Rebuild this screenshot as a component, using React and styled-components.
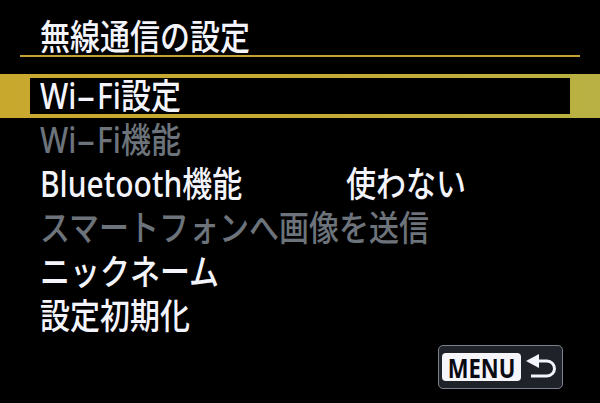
import React from "react";
import styled, { createGlobalStyle } from "styled-components";

const Global = createGlobalStyle`
  html, body { margin: 0; padding: 0; background: #000; }
  body { width: 600px; height: 403px; overflow: hidden; }
`;

const FONT = `"Noto Sans", "Noto Sans CJK JP", sans-serif`;

const Screen = styled.div`
  width: 600px;
  height: 403px;
  background: #000;
  display: flex;
  flex-direction: column;
  font-family: ${FONT};
  color: #f4f4fc;
`;

const Header = styled.div`
  margin: 0 20px;
  padding: 18px 0 0 20px;
  height: 57px;
  box-sizing: border-box;
  display: flex;
  align-items: center;
  border-bottom: 2px solid #c2a232;
`;

const Text = styled.span`
  display: inline-block;
  font-size: 30px;
  font-weight: 500;
  line-height: 36px;
  white-space: nowrap;
  transform: scaleY(1.18);
  color: ${(p) => (p.$disabled ? "#6c737b" : "#f4f4fc")};
`;

const Dash = styled.span`
  display: inline-block;
  margin: 0 6px 0 5px;
  transform: scaleX(2);
`;

const List = styled.div`
  margin-top: 17px;
  display: flex;
  flex-direction: column;
`;

const Row = styled.div`
  height: 44px;
  box-sizing: border-box;
  display: flex;
  align-items: stretch;
  padding: ${(p) => (p.$selected ? "4px 30px" : "0 0 0 40px")};
  background: ${(p) =>
    p.$selected
      ? "linear-gradient(90deg, #c9a82e 0%, #c4aa34 50%, #b9b144 100%)"
      : "transparent"};
`;

const RowBody = styled.div`
  flex: 1;
  display: grid;
  grid-template-columns: ${(p) => (p.$selected ? "296px" : "306px")} 1fr;
  align-items: center;
  background: #000;
  padding-left: ${(p) => (p.$selected ? "10px" : "0")};
`;

const Footer = styled.div`
  margin-top: 7px;
  display: flex;
  justify-content: flex-end;
  padding-right: 37px;
`;

const MenuButton = styled.div`
  display: flex;
  align-items: center;
  gap: 5px;
  height: 44px;
  box-sizing: border-box;
  padding: 7px 5px 7px 3px;
  border: 1px solid #7c828a;
  border-radius: 5px;
  background: #1f2329;
`;

const MenuKey = styled.div`
  width: 79px;
  height: 28px;
  border-radius: 4px;
  background: #f6f6fa;
  display: flex;
  align-items: center;
  justify-content: center;
`;

const MenuLabel = styled.span`
  display: inline-block;
  font-family: "Noto Sans", sans-serif;
  font-weight: 700;
  font-size: 22px;
  line-height: 28px;
  color: #0a0a14;
  transform: scaleY(1.22);
`;

const BackIcon = () => (
  <svg width="31" height="27" viewBox="0 0 31 27">
    <polygon points="0,7 13,0 13,14" fill="#f4f4fc" />
    <path
      d="M12 7 H21 A7.5 7.5 0 0 1 21 22 H5"
      fill="none"
      stroke="#f4f4fc"
      strokeWidth="3"
    />
  </svg>
);

const WiFi = () => (
  <>
    Wi<Dash>-</Dash>Fi
  </>
);

const items = [
  { key: "wifi-set", label: <><WiFi />設定</>, selected: true },
  { key: "wifi-func", label: <><WiFi />機能</>, disabled: true },
  { key: "bt", label: "Bluetooth機能", value: "使わない" },
  { key: "send", label: "スマートフォンへ画像を送信", disabled: true },
  { key: "nick", label: "ニックネーム" },
  { key: "reset", label: "設定初期化" },
];

export default function App() {
  return (
    <>
      <Global />
      <Screen>
        <Header>
          <Text>無線通信の設定</Text>
        </Header>
        <List>
          {items.map((it) => (
            <Row key={it.key} $selected={it.selected}>
              <RowBody $selected={it.selected}>
                <Text $disabled={it.disabled}>{it.label}</Text>
                {it.value && <Text>{it.value}</Text>}
              </RowBody>
            </Row>
          ))}
        </List>
        <Footer>
          <MenuButton>
            <MenuKey>
              <MenuLabel>MENU</MenuLabel>
            </MenuKey>
            <BackIcon />
          </MenuButton>
        </Footer>
      </Screen>
    </>
  );
}
